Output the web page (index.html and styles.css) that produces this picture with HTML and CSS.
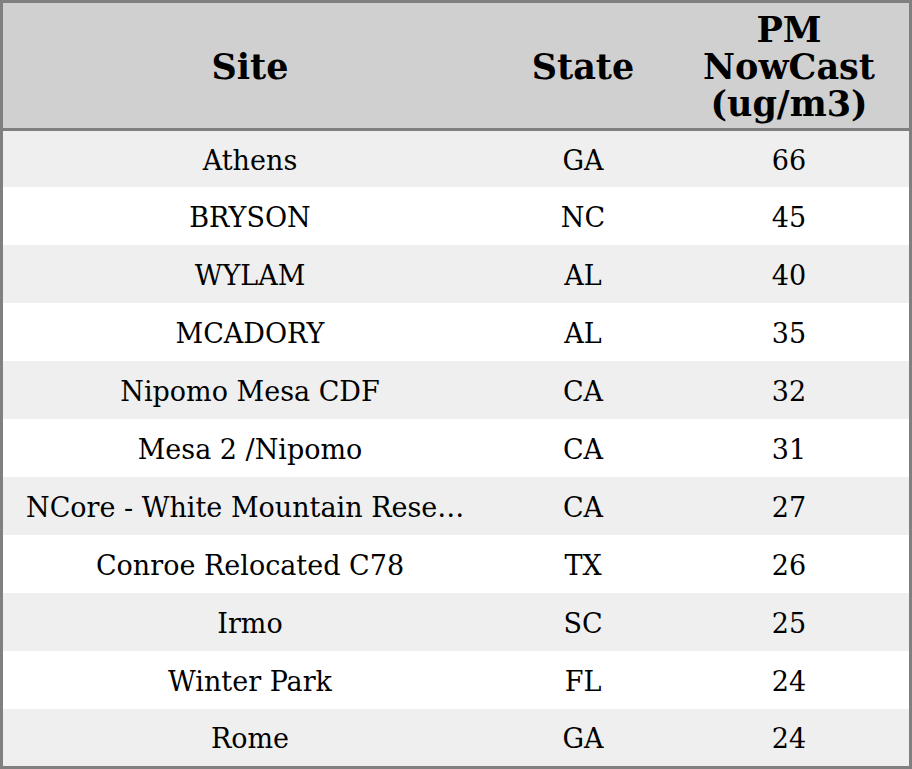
FILE: index.html
```html
<!DOCTYPE html>
<html>
<head>
<meta charset="utf-8">
<link rel="stylesheet" href="styles.css">
</head>
<body>
<table class="grid">
  <colgroup>
    <col class="c-site">
    <col class="c-state">
    <col class="c-pm">
  </colgroup>
  <thead>
    <tr>
      <th>Site</th>
      <th>State</th>
      <th>PM NowCast (ug/m3)</th>
    </tr>
  </thead>
  <tbody>
    <tr><td>Athens</td><td>GA</td><td>66</td></tr>
    <tr><td>BRYSON</td><td>NC</td><td>45</td></tr>
    <tr><td>WYLAM</td><td>AL</td><td>40</td></tr>
    <tr><td>MCADORY</td><td>AL</td><td>35</td></tr>
    <tr><td>Nipomo Mesa CDF</td><td>CA</td><td>32</td></tr>
    <tr><td>Mesa 2 /Nipomo</td><td>CA</td><td>31</td></tr>
    <tr><td>NCore - White Mountain Research Station</td><td>CA</td><td>27</td></tr>
    <tr><td>Conroe Relocated C78</td><td>TX</td><td>26</td></tr>
    <tr><td>Irmo</td><td>SC</td><td>25</td></tr>
    <tr><td>Winter Park</td><td>FL</td><td>24</td></tr>
    <tr><td>Rome</td><td>GA</td><td>24</td></tr>
  </tbody>
</table>
</body>
</html>
```
FILE: styles.css
```css
html, body {
  margin: 0;
  padding: 0;
  background: #ffffff;
}

.grid {
  width: 912px;
  table-layout: fixed;
  border-collapse: separate;
  border-spacing: 0;
  border: 3px solid #808080;
  font-family: "DejaVu Serif", serif;
  color: #000000;
}

.c-site { width: 494px; }
.c-state { width: 172px; }
.c-pm { width: 240px; }

.grid th {
  height: 128px;
  padding: 1px 24px 0;
  box-sizing: border-box;
  background: #d0d0d0;
  border-bottom: 3px solid #808080;
  font-size: 35px;
  font-weight: bold;
  text-align: center;
  vertical-align: middle;
  line-height: 37px;
}

.grid td {
  height: 58px;
  padding: 2px 23px 0;
  box-sizing: border-box;
  font-size: 27px;
  text-align: center;
  vertical-align: middle;
  white-space: nowrap;
  overflow: hidden;
  text-overflow: ellipsis;
}

.grid tbody tr:first-child td { height: 56px; }
.grid tbody tr:last-child td { height: 57px; }

.grid tbody tr:nth-child(odd) td { background: #efefef; }
.grid tbody tr:nth-child(even) td { background: #ffffff; }
```
